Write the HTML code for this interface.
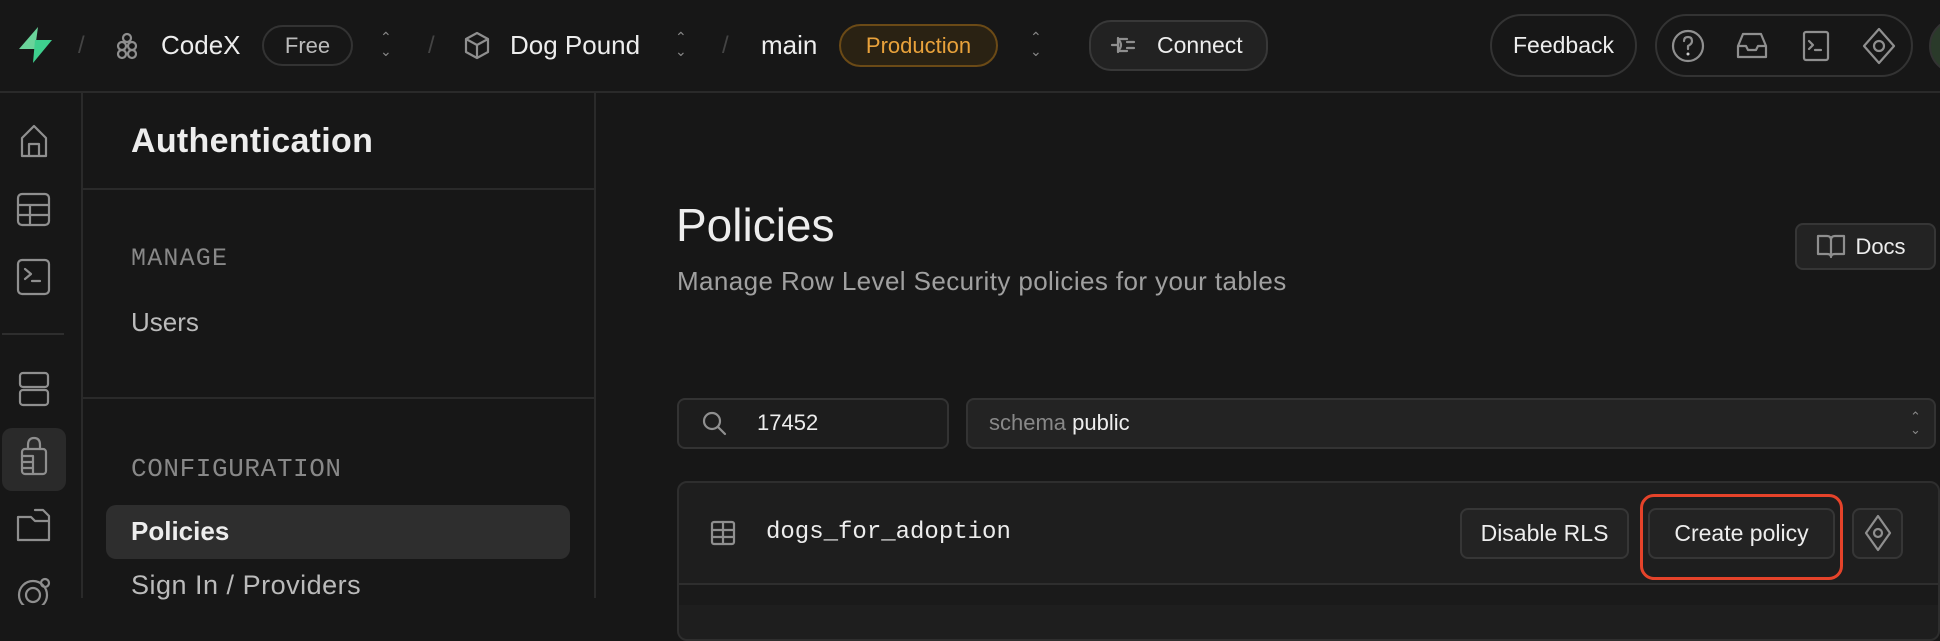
<!DOCTYPE html>
<html><head><meta charset="utf-8"><style>
*{box-sizing:border-box;margin:0;padding:0}
body{width:1940px;height:598px;background:#171717;color:#ededed;font-family:"Liberation Sans",sans-serif;position:relative;overflow:hidden}
.a{position:absolute}
.mono{font-family:"Liberation Mono",monospace}
.pill{position:absolute;border:2px solid #333;border-radius:22px;display:flex;align-items:center;justify-content:center}
.btn{position:absolute;background:#232323;border:2px solid #363636;border-radius:8px;display:flex;align-items:center;justify-content:center;font-size:22px;color:#ededed}
svg{position:absolute}
.ic{stroke:#8f8f8f;fill:none;stroke-width:2.2;stroke-linecap:round;stroke-linejoin:round}
.t{font-size:23px;white-space:nowrap;line-height:1}
</style></head><body>
<!-- topbar -->
<div class="a" style="left:0;top:91px;width:1940px;height:2px;background:#2a2a2a"></div>
<svg width="60" height="92" style="left:0;top:0"><path d="M38 27 L19 49 L35 49 Z" fill="#6ad39a"/><path d="M35 40 L52 40 L33 63 Z" fill="#3ecf8e"/></svg>
<div class="a t" style="left:78px;top:34px;color:#444;font-size:24px">/</div>
<svg width="30" height="30" style="left:114px;top:31px"><g class="ic" stroke-width="1.6"><circle cx="13" cy="7" r="4"/><circle cx="8" cy="15" r="4"/><circle cx="18" cy="15" r="4"/><circle cx="8" cy="23" r="4"/><circle cx="18" cy="23" r="4"/></g></svg>
<div class="a t" style="left:161px;top:32px;font-size:26px">CodeX</div>
<div class="pill" style="left:262px;top:25px;width:91px;height:41px;font-size:22px;color:#bbb">Free</div>
<div class="a t" style="left:380px;top:30px;color:#888;font-size:14px;line-height:14px">⌃<br>⌄</div>
<div class="a t" style="left:428px;top:34px;color:#444;font-size:24px">/</div>
<svg width="30" height="32" style="left:464px;top:30px"><g class="ic" stroke-width="1.8"><path d="M13 3 L24 9 V22 L13 28 L2 22 V9 Z M2 9 L13 15 L24 9 M13 15 V28"/></g></svg>
<div class="a t" style="left:510px;top:32px;font-size:26px">Dog Pound</div>
<div class="a t" style="left:675px;top:30px;color:#888;font-size:14px;line-height:14px">⌃<br>⌄</div>
<div class="a t" style="left:722px;top:34px;color:#444;font-size:24px">/</div>
<div class="a t" style="left:761px;top:32px;font-size:26px">main</div>
<div class="pill" style="left:839px;top:24px;width:159px;height:43px;font-size:22px;color:#e9a23b;background:#2a2213;border-color:#6b4a16">Production</div>
<div class="a t" style="left:1030px;top:30px;color:#888;font-size:14px;line-height:14px">⌃<br>⌄</div>
<div class="pill" style="left:1089px;top:20px;width:179px;height:51px;background:#222;border-color:#383838;font-size:23px;justify-content:flex-start;padding-left:66px">Connect</div>
<svg width="30" height="30" style="left:1110px;top:31px"><g class="ic" stroke="#aaa" stroke-width="2"><path d="M2 14 H8 M8 7 V21 M8 8 H17 M8 20 H17 M17 11 H24 M17 17 H24 M8 8 Q 14 14 8 20"/></g></svg>
<div class="pill" style="left:1490px;top:14px;width:147px;height:63px;border-radius:32px;font-size:23px">Feedback</div>
<div class="pill" style="left:1655px;top:14px;width:258px;height:63px;border-radius:32px"></div>
<svg width="36" height="36" style="left:1670px;top:28px"><g class="ic" stroke="#ccc"><circle cx="18" cy="18" r="15"/><path d="M14 13 Q14 9 18 9 Q22 9 22 13 Q22 16 18 18 V21"/></g><circle cx="18" cy="26" r="1.5" fill="#ccc"/></svg>
<svg width="36" height="36" style="left:1734px;top:28px"><g class="ic" stroke="#ccc"><path d="M4 18 L9 6 H27 L32 18 V29 H4 Z M4 18 H12 L14 22 H22 L24 18 H32"/></g></svg>
<svg width="36" height="36" style="left:1798px;top:28px"><g class="ic" stroke="#ccc"><rect x="6" y="4" width="24" height="28" rx="2"/><path d="M11 13 L15 17 L11 21 M17 22 H23"/></g></svg>
<svg width="36" height="40" style="left:1861px;top:26px"><g class="ic" stroke="#6fcf9f"><path d="M18 3 L33 20 L18 37 L3 20 Z"/><circle cx="18" cy="20" r="5"/></g></svg>
<div class="a" style="left:1929px;top:18px;width:56px;height:56px;border-radius:50%;background:#2a3a2a;border:2px solid #333"></div>
<!-- rail -->
<div class="a" style="left:81px;top:93px;width:2px;height:505px;background:#2a2a2a"></div>
<div class="a" style="left:594px;top:93px;width:2px;height:505px;background:#2a2a2a"></div>
<svg width="60" height="40" style="left:5px;top:122px"><g class="ic"><path d="M17 34 V16 L29 4 L41 16 V34 Z M24 34 V22 H34 V34"/></g></svg>
<svg width="60" height="40" style="left:5px;top:190px"><g class="ic"><rect x="13" y="4" width="31" height="31" rx="4"/><path d="M13 15 H44 M13 25 H44 M25 15 V35"/></g></svg>
<svg width="60" height="40" style="left:5px;top:257px"><g class="ic"><rect x="13" y="3" width="31" height="34" rx="4"/><path d="M20 12 L26 17 L20 22 M27 24 H35"/></g></svg>
<div class="a" style="left:2px;top:333px;width:62px;height:2px;background:#2e2e2e"></div>
<svg width="60" height="44" style="left:5px;top:369px"><g class="ic"><rect x="15" y="4" width="28" height="14" rx="3"/><rect x="15" y="21" width="28" height="15" rx="3"/></g></svg>
<div class="a" style="left:2px;top:428px;width:64px;height:63px;border-radius:10px;background:#2a2a2a"></div>
<svg width="60" height="50" style="left:5px;top:434px"><g class="ic" stroke="#eee"><path d="M23 15 V11 Q23 4 29 4 Q35 4 35 11 V15"/><rect x="17" y="15" width="24" height="25" rx="3"/><path d="M17 22 H28 V40 M17 28 H28 M17 34 H28"/></g></svg>
<svg width="60" height="44" style="left:5px;top:505px"><g class="ic"><path d="M13 12 V35 H44 V16 H30 L26 12 Z M30 5 H38 L44 11 V16"/></g></svg>
<svg width="60" height="40" style="left:5px;top:565px"><g class="ic"><circle cx="28" cy="30" r="14"/><circle cx="28" cy="30" r="7"/><circle cx="40" cy="18" r="4"/></g></svg>
<!-- sidebar -->
<div class="a t" style="left:131px;top:124px;font-size:34px;font-weight:bold;letter-spacing:0.3px">Authentication</div>
<div class="a" style="left:83px;top:188px;width:511px;height:2px;background:#2a2a2a"></div>
<div class="a t mono" style="left:131px;top:246px;color:#888;font-size:25px;letter-spacing:1.2px">MANAGE</div>
<div class="a t" style="left:131px;top:309px;color:#bbb;font-size:26px">Users</div>
<div class="a" style="left:83px;top:397px;width:511px;height:2px;background:#2a2a2a"></div>
<div class="a t mono" style="left:131px;top:456px;color:#888;font-size:26px;letter-spacing:0.6px">CONFIGURATION</div>
<div class="a" style="left:106px;top:505px;width:464px;height:54px;border-radius:10px;background:#2e2e2e"></div>
<div class="a t" style="left:131px;top:518px;font-size:26px;font-weight:bold">Policies</div>
<div class="a t" style="left:131px;top:572px;color:#bbb;font-size:27px;letter-spacing:0.5px">Sign In / Providers</div>
<!-- main -->
<div class="a t" style="left:676px;top:202px;font-size:46px">Policies</div>
<div class="a t" style="left:677px;top:268px;font-size:26px;color:#a0a0a0;letter-spacing:0.4px">Manage Row Level Security policies for your tables</div>
<div class="btn" style="left:1795px;top:223px;width:141px;height:47px;padding-left:30px;font-size:22px">Docs</div>
<svg width="36" height="30" style="left:1815px;top:232px"><g class="ic"><path d="M3 4 H12 Q16 4 16 8 V25 Q16 22 12 22 H3 Z M29 4 H20 Q16 4 16 8 V25 Q16 22 20 22 H29 Z"/></g></svg>
<div class="a" style="left:677px;top:398px;width:272px;height:51px;border:2px solid #333;border-radius:8px;background:#1d1d1d"></div>
<svg width="30" height="30" style="left:700px;top:409px"><g class="ic" stroke="#aaa"><circle cx="12" cy="12" r="8"/><path d="M18 18 L25 25"/></g></svg>
<div class="a t" style="left:757px;top:412px;font-size:22px">17452</div>
<div class="a" style="left:966px;top:398px;width:970px;height:51px;border:2px solid #333;border-radius:8px;background:#232323"></div>
<div class="a t" style="left:989px;top:412px;font-size:22px;color:#888">schema <span style="color:#eee">public</span></div>
<div class="a t" style="left:1910px;top:410px;color:#888;font-size:13px;line-height:13px">⌃<br>⌄</div>
<div class="a" style="left:677px;top:481px;width:1263px;height:160px;border:2px solid #2e2e2e;border-radius:10px;background:#1e1e1e"></div>
<div class="a" style="left:679px;top:583px;width:1259px;height:2px;background:#2e2e2e"></div>
<div class="a" style="left:679px;top:585px;width:1259px;height:20px;background:#1a1a1a"></div>
<svg width="30" height="30" style="left:710px;top:520px"><g class="ic" stroke="#555" stroke-width="1.8"><rect x="2" y="2" width="22" height="22" rx="2"/><path d="M2 10 H24 M2 17 H24 M13 2 V24"/></g></svg>
<div class="a t mono" style="left:766px;top:521px;font-size:24px">dogs_for_adoption</div>
<div class="btn" style="left:1460px;top:508px;width:169px;height:51px;font-size:23px">Disable RLS</div>
<div class="btn" style="left:1648px;top:508px;width:187px;height:51px;font-size:23px">Create policy</div>
<div class="a" style="left:1640px;top:494px;width:203px;height:86px;border:3.5px solid #e5432a;border-radius:14px"></div>
<div class="btn" style="left:1852px;top:508px;width:51px;height:51px"></div>
<svg width="30" height="40" style="left:1863px;top:513px"><g class="ic" stroke="#6fcf9f" stroke-width="1.8"><path d="M15 3 L27 20 L15 37 L3 20 Z"/><circle cx="15" cy="20" r="4"/></g></svg>
</body></html>
